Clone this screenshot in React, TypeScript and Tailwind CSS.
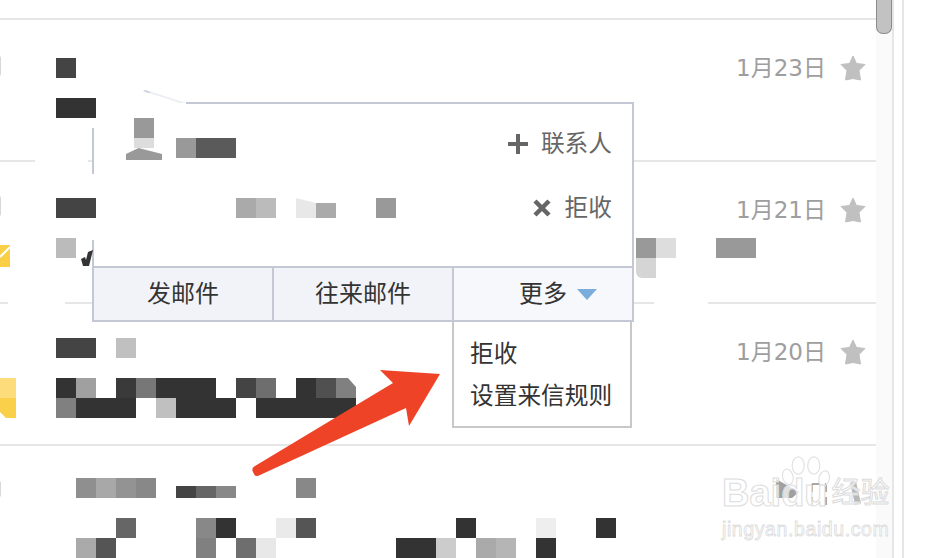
const cjk = "font-['DejaVu_Sans','Noto_Sans_CJK_SC',sans-serif]";

// mosaic lines, one slot = 20px. null leaves the slot empty
type Cell = string | null;
const _ = null;

interface RowData {
  padTop: string;
  dateTop: string;
  first: Cell[];
  second: Cell[];
  third?: Cell[];
  date?: string;
}

const rows: RowData[] = [
  {
    padTop: 'pt-[38px]',
    dateTop: '-mt-[6px]',
    first: ['bg-[#444444]'],
    second: ['bg-[#333333]', 'bg-[#333333]'],
    date: '1月23日',
  },
  {
    padTop: 'pt-[36px]',
    dateTop: '-mt-[4px]',
    first: ['bg-[#444444]', 'bg-[#444444]', _, _, _, _, _, _, _, 'bg-[#aaaaaa]', 'bg-[#bbbbbb]', _, 'bg-[#e8e8e8] [clip-path:polygon(0_0,100%_25%,100%_100%,0_100%)]', 'bg-[#aaaaaa] mt-[5px] h-[15px]!', _, _, 'bg-[#999999]'],
    second: ['bg-[#bbbbbb]', _, _, _, _, _, _, _, _, _, _, _, _, _, _, _, _, _, _, _, _, _, _, _, _, _, _, _, _, 'bg-[#999999]', 'bg-[#dddddd]', _, _, 'bg-[#999999]', 'bg-[#999999]'],
    third: [_, _, _, _, _, _, _, _, _, _, _, _, _, _, _, _, _, _, _, _, _, _, _, _, _, _, _, _, _, 'bg-[#d5d5d5] rounded-bl-md'],
    date: '1月21日',
  },
  {
    padTop: 'pt-[34px]',
    dateTop: '-mt-[2px]',
    first: ['bg-[#444444]', 'bg-[#444444]', _, 'bg-[#c0c0c0]'],
    second: ['bg-[#333333]', 'bg-[#a0a0a0]', _, 'bg-[#3a3a3a]', 'bg-[#777777]', 'bg-[#333333]', 'bg-[#333333]', 'bg-[#333333]', _, 'bg-[#444444]', 'bg-[#6e6e6e]', _, 'bg-[#333333]', 'bg-[#505050]', 'bg-[#808080] [clip-path:polygon(0_0,60%_0,100%_45%,100%_100%,0_100%)]'],
    third: ['bg-[#808080]', 'bg-[#333333]', 'bg-[#333333]', 'bg-[#333333]', _, 'bg-[#c0c0c0]', 'bg-[#333333]', 'bg-[#333333]', 'bg-[#333333]', _, 'bg-[#333333]', 'bg-[#333333]', 'bg-[#333333]', 'bg-[#333333]', 'bg-[#333333]'],
    date: '1月20日',
  },
  {
    padTop: 'pt-[32px]',
    dateTop: 'mt-0',
    first: [_, 'bg-[#8f8f8f]', 'bg-[#a8a8a8]', 'bg-[#939393]', 'bg-[#888888]', _, 'bg-[#444444] mt-2 h-3!', 'bg-[#666666] mt-2 h-3!', 'bg-[#888888] mt-2 h-3!', _, _, _, 'bg-[#888888]'],
    second: [_, _, _, 'bg-[#666666]', _, _, _, 'bg-[#888888]', 'bg-[#333333]', _, _, 'bg-[#eaeaea]', 'bg-[#555555]', _, _, _, _, _, _, _, 'bg-[#333333]', _, _, _, 'bg-[#eeeeee]', _, _, 'bg-[#333333]'],
    third: [_, 'bg-[#aaaaaa]', 'bg-[#555555]', _, _, _, _, 'bg-[#808080]', _, 'bg-[#6e6e6e]', 'bg-[#e8e8e8]', _, _, _, _, _, _, 'bg-[#333333]', 'bg-[#333333]', 'bg-[#cccccc]', _, 'bg-[#aaaaaa]', 'bg-[#b5b5b5]', _, 'bg-[#333333]'],
  },
];

function Line({ cells }: { cells: Cell[] }) {
  return (
    <div className="relative z-20 flex h-5">
      {cells.map((c, i) => (
        <div key={i} className={`w-5 h-5 shrink-0 ${c ?? ''}`} />
      ))}
    </div>
  );
}

function Star() {
  return (
    <svg width="26" height="26" viewBox="0 0 26 26" className="ml-[14px] shrink-0">
      <path
        d="M13 1 L16.5 8.5 L25 9.5 L19 15.5 L20.5 25 L13 23.5 L5.5 25 L7 15.5 L1 9.5 L9.5 8.5 Z"
        fill="#c0c0c0"
        stroke="#c0c0c0"
        strokeWidth="1"
        strokeLinejoin="round"
      />
    </svg>
  );
}

function MailRow({ row, index }: { row: RowData; index: number }) {
  return (
    <div className={`flex h-[142px] shrink-0 overflow-visible border-b-2 border-[#e6e6e6] ${row.padTop}`}>
      <div className="w-14 shrink-0">
        {(index === 0 || index === 1) && (
          <div className="-ml-[19px] mt-[-3px] h-[22px] w-5 rounded-[3px] border border-[#d8d8d8]" />
        )}
        {index === 1 && (
          <svg width="10" height="22" viewBox="0 0 10 22" className="mt-[28px]">
            <rect width="10" height="22" fill="#f8cf45" />
            <path d="M0 12 L10 2" stroke="#ffffff" strokeWidth="2" />
          </svg>
        )}
        {index === 2 && (
          <svg width="16" height="40" viewBox="0 0 16 40" className="mt-[40px]">
            <path d="M0 0 H16 V20 H0 Z" fill="#fddc7c" />
            <path d="M0 20 H16 V40 H6 L0 34 Z" fill="#fad04a" />
          </svg>
        )}
        {index === 3 && <div className="-ml-[19px] mt-[2px] h-[18px] w-5 rounded-[3px] border border-[#d8d8d8]" />}
      </div>
      <div className="flex-1 min-w-0">
        <Line cells={row.first} />
        <div className="mt-5">
          <Line cells={row.second} />
          {row.third && <Line cells={row.third} />}
        </div>
      </div>
      {row.date ? <DateCell date={row.date} top={row.dateTop} /> : <ErasedDate />}
    </div>
  );
}

function DateCell({ date, top }: { date: string; top: string }) {
  return (
    <div className={`-ml-px flex h-8 w-[140px] shrink-0 items-center text-[23px] leading-8 text-[#9e9e9e] ${top}`}>
      <span className="whitespace-nowrap">{date}</span>
      <Star />
    </div>
  );
}

// last row: the date is mostly wiped out by the watermark
function ErasedDate() {
  return (
    <div className="w-[139px] shrink-0">
      <svg width="139" height="34" viewBox="0 0 139 34">
        <path d="M39 1 L62 14 L55 20 L49 20 H39 Z" fill="#a0a0a0" />
        <path d="M75 6 H89 M75 6 V28 M89 6 V28" stroke="#8a8a8a" strokeWidth="1.5" fill="none" strokeDasharray="8 5" />
        <path d="M116 4 L121 26" stroke="#b8b8b8" strokeWidth="6" />
      </svg>
    </div>
  );
}

function Popup() {
  return (
    <div className="absolute left-[92px] top-[102px] z-10 w-[542px] border-2 border-[#c3c8d4] bg-white">
      <div className="h-[162px] px-[20px] pt-[14px] pl-[32px]">
        <div className="flex justify-between">
          <div className="flex h-[42px] items-end gap-[14px]">
            <div className="flex w-9 flex-col items-center">
              <div className="h-5 w-5 bg-[#999999]" />
              <div className="h-[10px] w-5 bg-[#dddddd]" />
              <div className="h-3 w-9 bg-[#999999] [clip-path:polygon(0_50%,35%_0,100%_50%,100%_100%,0_100%)]" />
            </div>
            <div className="mb-[2px] flex h-5">
              <div className="w-5 bg-[#999999]" />
              <div className="w-10 bg-[#5a5a5a]" />
            </div>
          </div>
          <div className="mt-[10px] flex h-8 items-center gap-[13px] text-[#666666]">
            <svg width="20" height="20" viewBox="0 0 20 20">
              <path d="M10 0 V20 M0 10 H20" stroke="#666666" strokeWidth="4" />
            </svg>
            <span className="text-[23.7px] leading-8">联系人</span>
          </div>
        </div>
        <div className="mt-[32px] flex h-8 items-center justify-end gap-[13px] text-[#666666]">
          <svg width="20" height="20" viewBox="0 0 20 20">
            <path d="M3 3 L17 17 M17 3 L3 17" stroke="#666666" strokeWidth="4.5" />
          </svg>
          <span className="text-[23.7px] leading-8">拒收</span>
        </div>
      </div>
      <div className="flex h-[54px] border-t-2 border-[#c3c8d4] text-[24px] text-[#333333]">
        <div className="flex w-[180px] items-center justify-center border-r-2 border-[#c3c8d4] bg-[#f1f3f8]">发邮件</div>
        <div className="flex w-[180px] items-center justify-center border-r-2 border-[#c3c8d4] bg-[#f1f3f8]">往来邮件</div>
        <div className="flex flex-1 items-center justify-center gap-[10px] bg-[#f7f8fb] pl-[30px]">
          更多
          <svg width="20" height="11" viewBox="0 0 20 11">
            <path d="M0 0 H20 L10 11 Z" fill="#7aaddc" />
          </svg>
        </div>
      </div>
      {/* dropdown hangs under the 更多 button */}
      <div className="absolute left-[358px] top-[calc(100%+2px)] h-[106px] w-[180px] border-2 border-t-0 border-[#c8c8c8] bg-white pl-[16px] pt-[11px] text-[23.7px] leading-[42px] text-[#333333]">
        <div>拒收</div>
        <div>设置来信规则</div>
      </div>
    </div>
  );
}

function Watermark() {
  return (
    <div className="absolute left-[722px] top-[456px] z-30 flex w-[175px] flex-col items-start whitespace-nowrap">
      <svg width="52" height="38" viewBox="0 0 60 44" className="-mb-[17px] ml-[58px]" fill="none" stroke="#e2e2e2" strokeWidth="1.4">
        <ellipse cx="9" cy="24" rx="6" ry="9" transform="rotate(-15 9 24)" />
        <ellipse cx="21" cy="11" rx="7" ry="10" />
        <ellipse cx="39" cy="11" rx="7" ry="10" />
        <ellipse cx="51" cy="26" rx="6" ry="9" transform="rotate(15 51 26)" />
      </svg>
      <div className="relative flex h-8 items-center font-['Liberation_Sans','Noto_Sans_CJK_SC',sans-serif] text-[38px] font-bold leading-8 text-white/70 [-webkit-text-stroke:1px_#dcdcdc]">
        <span>Bai</span>
        <span>du</span>
        <span className="ml-[4px] text-[29px] font-normal">经验</span>
      </div>
      <div className="mt-[8px] font-['Liberation_Sans',sans-serif] text-[19.5px] leading-6 tracking-[0.6px] text-white [-webkit-text-stroke:0.8px_#dcdcdc]">
        jingyan.baidu.com
      </div>
    </div>
  );
}

export default function App() {
  return (
    <div className={`relative flex h-[558px] w-[942px] overflow-hidden bg-white ${cjk}`}>
      <div className="flex h-full w-[876px] shrink-0 flex-col">
        <div className="h-5 shrink-0 border-b-2 border-[#e6e6e6]" />
        {rows.map((row, i) => (
          <MailRow key={i} row={row} index={i} />
        ))}
      </div>

      {/* scrollbar */}
      <div className="h-full w-4 shrink-0 bg-[#fafafa]">
        <div className="h-[34px] rounded-b-[7px] border border-t-0 border-[#8c8c8c] bg-[#c2c2c2]" />
      </div>
      <div className="h-full w-[2px] shrink-0 bg-[#e6e6e6]" />
      <div className="ml-2 h-full w-[2px] shrink-0 bg-[#e6e6e6]" />

      <Popup />

      {/* white smears left by the screenshot's redaction */}
      <div className="absolute left-[88px] top-[100px] z-[15] h-[6px] w-[98px] bg-white" />
      <div className="absolute left-[90px] top-[104px] z-[15] h-6 w-[6px] bg-white" />
      <div className="absolute left-[90px] top-[174px] z-[15] h-[66px] w-[6px] bg-white" />
      <div className="absolute left-[35px] top-[160px] h-[2px] w-[53px] bg-white" />
      <div className="absolute left-2 top-[302px] h-[2px] w-[57px] bg-white" />
      <div className="absolute left-[654px] top-[302px] h-[2px] w-[54px] bg-white" />
      <svg width="50" height="20" viewBox="0 0 50 20" className="absolute left-[140px] top-[88px] z-[15]">
        <path d="M3 3 L6 2 L46 15 L40 15 Z" fill="#eceef3" />
        <path d="M3 3 L6 2 L11 5 L8 5 Z" fill="#ccd0dc" />
      </svg>

      {/* stray check mark in row two */}
      <svg width="12" height="18" viewBox="0 0 12 18" className="absolute left-[81px] top-[249px] z-20">
        <path d="M0 10 L4 8 L5 11 L7 3 L12 1 L8 17 L2 17 Z" fill="#333333" />
      </svg>

      {/* red annotation arrow */}
      <svg width="200" height="120" viewBox="0 0 200 120" className="absolute left-[248px] top-[364px] z-30">
        <path
          d="M132 6 L192 10 L161 62 L158 44 L12 111 Q7 114 5 108 Q3 104 7 102 L145 19 Z"
          fill="#ee4326"
        />
      </svg>

      <Watermark />
    </div>
  );
}
